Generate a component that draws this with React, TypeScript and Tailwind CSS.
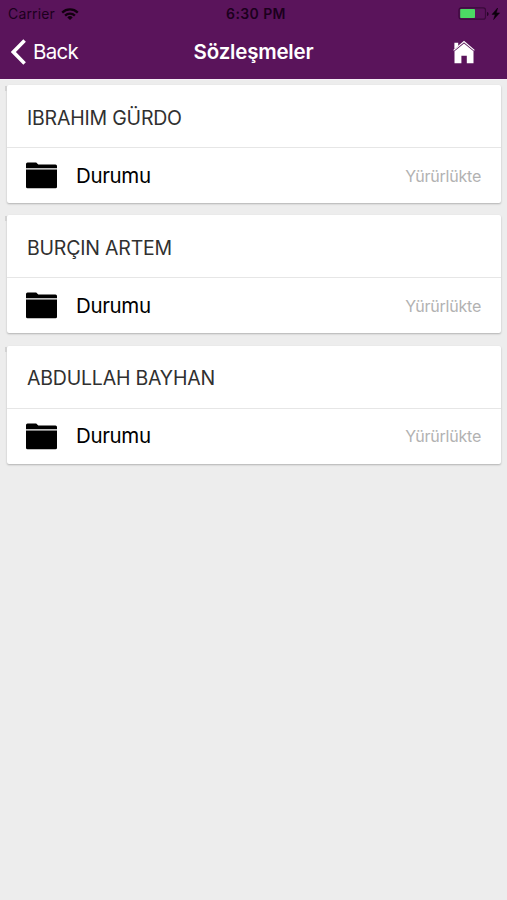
const contracts = [
  { name: "IBRAHIM GÜRDO", status: "Yürürlükte" },
  { name: "BURÇIN ARTEM", status: "Yürürlükte" },
  { name: "ABDULLAH BAYHAN", status: "Yürürlükte" },
];

function WifiIcon() {
  return (
    <svg className="ml-[6px] h-3 w-[18px]" viewBox="0 0 18 12" fill="none" stroke="#12000f" strokeWidth="2.3">
      <path d="M1.2 4.6a11.2 11.2 0 0 1 15.6 0" />
      <path d="M4.1 7.6a7 7 0 0 1 9.8 0" />
      <path d="M9 12 6.3 9.4a3.9 3.9 0 0 1 5.4 0z" fill="#12000f" stroke="none" />
    </svg>
  );
}

function BatteryIcon() {
  return (
    <svg className="h-[14px] w-[44px]" viewBox="0 0 44 14">
      <rect x="1" y="0.8" width="26.5" height="11.3" rx="2.2" fill="none" stroke="#3a0a3b" strokeWidth="1.2" />
      <rect x="2.2" y="2" width="14.8" height="9" rx="0.8" fill="#4cd964" />
      <path d="M29 5v4c1.2-.3 1.6-1 1.6-2s-.4-1.7-1.6-2z" fill="#260627" />
      <path d="M39.6 1 34 7.4h3.2l-1.6 5.2 6-6.7h-3.3z" fill="#0c000c" stroke="#0c000c" strokeWidth="0.5" />
    </svg>
  );
}

function HomeIcon() {
  return (
    <svg className="h-6 w-6" viewBox="0 0 24 24">
      <path d="M2.4 2.7h3.8v3.2L2.4 9z" fill="#fff" />
      <path d="M1.6 10.4 12 1.6l10.4 8.8" fill="none" stroke="#fff" strokeWidth="1.2" />
      <path d="M2.5 11.2 12 3.5l9.5 7.7v12h-6.7v-7.4H9.4v7.4H2.5z" fill="#fff" />
    </svg>
  );
}

function FolderIcon() {
  return (
    <svg className="h-[27px] w-[31px]" viewBox="0 0 31 27">
      <path d="M0 6.3V2Q0 .5 1.5.5h8.7l2.1 1.9h17.2Q31 2.4 31 3.9v2.4z" />
      <path d="M0 7.5h31v17.2q0 1.5-1.5 1.5h-28Q0 26.2 0 24.7z" />
    </svg>
  );
}

function ContractCard({ name, status }: { name: string; status: string }) {
  return (
    <div className="relative h-[118px] rounded-[2px] bg-white shadow-[0_1px_2px_rgba(0,0,0,0.25)]">
      {/* Marker on the card's edge */}
      <span className="absolute top-[1px] -left-[2px] h-[5px] w-[2px] bg-[#d2d2d2]" />
      <div className="flex h-[63px] items-center border-b border-[#e6e6e6] px-5 pt-[5px]">
        <h2 className="text-[19.5px] tracking-[-0.2px] whitespace-nowrap text-[#303030]">{name}</h2>
      </div>
      <div className="flex h-[55px] items-center px-[19px]">
        <FolderIcon />
        <span className="ml-[19px] pt-[1px] text-[20.5px] tracking-[-0.35px] text-black">Durumu</span>
        <span className="ml-auto pr-[1px] text-[16px] tracking-[-0.22px] text-[#b2b2b2]">{status}</span>
      </div>
    </div>
  );
}

export default function App() {
  return (
    <div className="h-[900px] w-[507px] overflow-hidden bg-[#ededed] font-['Inter',sans-serif]">
      <header className="h-[79px] bg-[#5a145b]">
        {/* Status bar */}
        <div className="grid h-[27px] grid-cols-3 items-center pl-2 text-[14px] text-[#1c001d]">
          <div className="flex items-center">
            <span className="tracking-[0.15px]">Carrier</span>
            <WifiIcon />
          </div>
          <span className="pr-[3px] text-center font-semibold tracking-[0.4px]">6:30 PM</span>
          <div className="flex justify-end pr-[5px]">
            <BatteryIcon />
          </div>
        </div>

        {/* Navigation bar */}
        <div className="grid h-[50px] grid-cols-3 items-center text-white">
          <button className="flex items-center pl-[11px]">
            <svg className="h-[26px] w-[15px]" viewBox="0 0 15 26" fill="none" stroke="white" strokeWidth="3.6">
              <path d="M13.6 1.6 2.4 13l11.2 11.4" />
            </svg>
            <span className="ml-[7px] text-[20.5px] tracking-[-0.75px]">Back</span>
          </button>
          <h1 className="text-center text-[20.5px] font-semibold tracking-[-0.2px]">Sözleşmeler</h1>
          <button className="flex justify-end pr-[31px]">
            <HomeIcon />
          </button>
        </div>
      </header>

      <main className="flex flex-col gap-[12.3px] border-t border-[#f6eef6] pt-[5px] pr-[6px] pl-[7px]">
        {contracts.map((contract) => (
          <ContractCard key={contract.name} name={contract.name} status={contract.status} />
        ))}
      </main>
    </div>
  );
}
